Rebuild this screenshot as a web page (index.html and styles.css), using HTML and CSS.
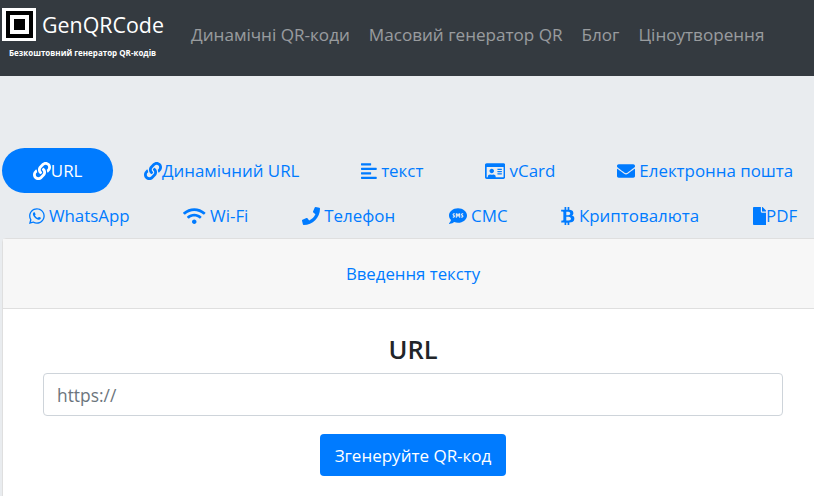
FILE: index.html
```html
<!DOCTYPE html>
<html>
  <head>
    <title>GenQRCode</title>
    <link rel="stylesheet" href="styles.css">
  </head>
  <body>
    <nav class="navbar">
      <div class="brand">
        <div class="brand-top">
          <svg class="logo" viewBox="0 0 34 33">
            <rect width="34" height="33" fill="#fff"/>
            <rect x="4" y="3" width="27" height="27" fill="#000"/>
            <rect x="8" y="7" width="19" height="19" fill="#fff"/>
            <rect x="12" y="11" width="11" height="11" fill="#000"/>
          </svg>
          <span class="brand-name">GenQRCode</span>
        </div>
        <div class="brand-sub">Безкоштовний генератор QR-кодів</div>
      </div>
      <div class="nav-links">
        <a href="#">Динамічні QR-коди</a>
        <a href="#">Масовий генератор QR</a>
        <a href="#">Блог</a>
        <a href="#">Ціноутворення</a>
      </div>
    </nav>

    <div class="main">
      <ul class="pills">
        <li><a class="active" href="#"><svg class="icon" viewBox="0 0 512 512"><path d="M326.612 185.391c59.747 59.809 58.927 155.698.36 214.59-.11.12-.24.25-.36.37l-67.2 67.2c-59.27 59.27-155.699 59.262-214.96 0-59.27-59.26-59.27-155.7 0-214.96l37.106-37.106c9.84-9.84 26.786-3.3 27.294 10.606.648 17.722 3.826 35.527 9.69 52.721 1.986 5.822.567 12.262-3.783 16.612l-13.087 13.087c-28.026 28.026-28.905 73.66-1.155 101.96 28.024 28.579 74.086 28.749 102.325.51l67.2-67.19c28.191-28.191 28.073-73.757 0-101.83-3.701-3.694-7.429-6.564-10.341-8.569a16.037 16.037 0 0 1-6.947-12.606c-.396-10.567 3.348-21.456 11.698-29.806l21.054-21.055c5.521-5.521 14.182-6.199 20.584-1.731a152.482 152.482 0 0 1 20.522 17.197zM467.547 44.449c-59.261-59.262-155.69-59.27-214.96 0l-67.2 67.2c-.12.12-.25.25-.36.37-58.566 58.892-59.387 154.781.36 214.59a152.454 152.454 0 0 0 20.521 17.196c6.402 4.468 15.064 3.789 20.584-1.731l21.054-21.055c8.35-8.35 12.094-19.239 11.698-29.806a16.037 16.037 0 0 0-6.947-12.606c-2.912-2.005-6.64-4.875-10.341-8.569-28.073-28.073-28.191-73.639 0-101.83l67.2-67.19c28.239-28.239 74.3-28.069 102.325.51 27.75 28.3 26.872 73.934-1.155 101.96l-13.087 13.087c-4.35 4.35-5.769 10.79-3.783 16.612 5.864 17.194 9.042 34.999 9.69 52.721.509 13.906 17.454 20.446 27.294 10.606l37.106-37.106c59.271-59.259 59.271-155.699.001-214.959z"/></svg>URL</a></li>
        <li><a href="#"><svg class="icon" viewBox="0 0 512 512"><path d="M326.612 185.391c59.747 59.809 58.927 155.698.36 214.59-.11.12-.24.25-.36.37l-67.2 67.2c-59.27 59.27-155.699 59.262-214.96 0-59.27-59.26-59.27-155.7 0-214.96l37.106-37.106c9.84-9.84 26.786-3.3 27.294 10.606.648 17.722 3.826 35.527 9.69 52.721 1.986 5.822.567 12.262-3.783 16.612l-13.087 13.087c-28.026 28.026-28.905 73.66-1.155 101.96 28.024 28.579 74.086 28.749 102.325.51l67.2-67.19c28.191-28.191 28.073-73.757 0-101.83-3.701-3.694-7.429-6.564-10.341-8.569a16.037 16.037 0 0 1-6.947-12.606c-.396-10.567 3.348-21.456 11.698-29.806l21.054-21.055c5.521-5.521 14.182-6.199 20.584-1.731a152.482 152.482 0 0 1 20.522 17.197zM467.547 44.449c-59.261-59.262-155.69-59.27-214.96 0l-67.2 67.2c-.12.12-.25.25-.36.37-58.566 58.892-59.387 154.781.36 214.59a152.454 152.454 0 0 0 20.521 17.196c6.402 4.468 15.064 3.789 20.584-1.731l21.054-21.055c8.35-8.35 12.094-19.239 11.698-29.806a16.037 16.037 0 0 0-6.947-12.606c-2.912-2.005-6.64-4.875-10.341-8.569-28.073-28.073-28.191-73.639 0-101.83l67.2-67.19c28.239-28.239 74.3-28.069 102.325.51 27.75 28.3 26.872 73.934-1.155 101.96l-13.087 13.087c-4.35 4.35-5.769 10.79-3.783 16.612 5.864 17.194 9.042 34.999 9.69 52.721.509 13.906 17.454 20.446 27.294 10.606l37.106-37.106c59.271-59.259 59.271-155.699.001-214.959z"/></svg>Динамічний URL</a></li>
        <li><a href="#"><svg class="icon" viewBox="0 0 448 512"><path d="M12.83 352h262.34A12.82 12.82 0 0 0 288 339.17v-38.34A12.82 12.82 0 0 0 275.17 288H12.83A12.82 12.82 0 0 0 0 300.83v38.34A12.82 12.82 0 0 0 12.83 352zm0-256h262.34A12.82 12.82 0 0 0 288 83.17V44.83A12.82 12.82 0 0 0 275.17 32H12.83A12.82 12.82 0 0 0 0 44.83v38.34A12.82 12.82 0 0 0 12.83 96zM432 160H16a16 16 0 0 0-16 16v32a16 16 0 0 0 16 16h416a16 16 0 0 0 16-16v-32a16 16 0 0 0-16-16zm0 256H16a16 16 0 0 0-16 16v32a16 16 0 0 0 16 16h416a16 16 0 0 0 16-16v-32a16 16 0 0 0-16-16z"/></svg> текст</a></li>
        <li><a href="#"><svg class="icon" viewBox="0 0 576 512"><path d="M528 32H48C21.5 32 0 53.5 0 80v352c0 26.5 21.5 48 48 48h480c26.5 0 48-21.5 48-48V80c0-26.5-21.5-48-48-48zm0 400H303.2c.9-4.5.8 3.6.8-22.4 0-31.8-30.1-57.6-67.2-57.6-10.8 0-18.7 8-44.8 8-26.9 0-33.4-8-44.8-8-37.1 0-67.2 25.8-67.2 57.6 0 26-.2 17.9.8 22.4H48V144h480v288zm-168-80h112c4.4 0 8-3.6 8-8v-16c0-4.4-3.6-8-8-8H360c-4.4 0-8 3.6-8 8v16c0 4.4 3.6 8 8 8zm0-64h112c4.4 0 8-3.6 8-8v-16c0-4.4-3.6-8-8-8H360c-4.4 0-8 3.6-8 8v16c0 4.4 3.6 8 8 8zm0-64h112c4.4 0 8-3.6 8-8v-16c0-4.4-3.6-8-8-8H360c-4.4 0-8 3.6-8 8v16c0 4.4 3.6 8 8 8zm-168 96c35.3 0 64-28.7 64-64s-28.7-64-64-64-64 28.7-64 64 28.7 64 64 64z"/></svg> vCard</a></li>
        <li><a href="#"><svg class="icon" viewBox="0 0 512 512"><path d="M502.3 190.8c3.9-3.1 9.7-.2 9.7 4.7V400c0 26.5-21.5 48-48 48H48c-26.5 0-48-21.5-48-48V195.6c0-5 5.7-7.8 9.7-4.7 22.4 17.4 52.1 39.5 154.1 113.6 21.1 15.4 56.7 47.8 92.2 47.6 35.7.3 72-32.8 92.3-47.6 102-74.1 131.6-96.3 154-113.7zM256 320c23.2.4 56.6-29.2 73.4-41.4 132.7-96.3 142.8-104.7 173.4-128.7 5.8-4.5 9.2-11.5 9.2-18.9v-19c0-26.5-21.5-48-48-48H48C21.5 64 0 85.5 0 112v19c0 7.4 3.4 14.3 9.2 18.9 30.6 23.9 40.7 32.4 173.4 128.7 16.8 12.2 50.2 41.8 73.4 41.4z"/></svg> Електронна пошта</a></li>
      </ul>
      <ul class="pills">
        <li><a href="#"><svg class="icon" viewBox="0 0 448 512"><path d="M380.9 97.1C339 55.1 283.2 32 223.9 32c-122.4 0-222 99.6-222 222 0 39.1 10.2 77.3 29.6 111L0 480l117.7-30.9c32.4 17.7 68.9 27 106.1 27h.1c122.3 0 224.1-99.6 224.1-222 0-59.3-25.2-115-67.1-157zm-157 341.6c-33.2 0-65.7-8.9-94-25.7l-6.7-4-69.8 18.3L72 359.2l-4.4-7c-18.5-29.4-28.2-63.3-28.2-98.2 0-101.7 82.8-184.5 184.6-184.5 49.3 0 95.6 19.2 130.4 54.1 34.8 34.9 56.2 81.2 56.1 130.5 0 101.8-84.9 184.6-186.6 184.6zm101.2-138.2c-5.5-2.8-32.8-16.2-37.9-18-5.1-1.9-8.8-2.8-12.5 2.8-3.7 5.6-14.3 18-17.6 21.8-3.2 3.7-6.5 4.2-12 1.4-32.6-16.3-54-29.1-75.5-66-5.7-9.8 5.7-9.1 16.3-30.3 1.8-3.7.9-6.9-.5-9.7-1.4-2.8-12.5-30.1-17.1-41.2-4.5-10.8-9.1-9.3-12.5-9.5-3.2-.2-6.9-.2-10.6-.2-3.7 0-9.7 1.4-14.8 6.9-5.1 5.6-19.4 19-19.4 46.3 0 27.3 19.9 53.7 22.6 57.4 2.8 3.7 39.1 59.7 94.8 83.8 35.2 15.2 49 16.5 66.6 13.9 10.7-1.6 32.8-13.4 37.4-26.4 4.6-13 4.6-24.1 3.2-26.4-1.3-2.5-5-3.9-10.5-6.6z"/></svg> WhatsApp</a></li>
        <li><a href="#"><svg class="icon" viewBox="0 0 640 512"><path d="M634.91 154.88C457.74-8.99 182.19-8.93 5.09 154.88c-6.66 6.16-6.79 16.59-.35 22.98l34.24 33.97c6.14 6.1 16.02 6.23 22.4.38 145.92-133.68 371.3-133.71 517.25 0 6.38 5.85 16.26 5.71 22.4-.38l34.24-33.97c6.43-6.39 6.3-16.82-.36-22.98zM320 352c-35.35 0-64 28.65-64 64s28.65 64 64 64 64-28.65 64-64-28.65-64-64-64zm202.67-83.59c-115.26-101.93-290.21-101.82-405.34 0-6.9 6.1-7.12 16.69-.57 23.15l34.44 33.99c6 5.92 15.66 6.32 22.05.8 83.95-72.57 209.74-72.41 293.49 0 6.39 5.52 16.05 5.13 22.05-.8l34.44-33.99c6.56-6.46 6.33-17.06-.56-23.15z"/></svg> Wi-Fi</a></li>
        <li><a href="#"><svg class="icon" viewBox="0 0 512 512"><path d="M493.4 24.6l-104-24c-11.3-2.6-22.9 3.3-27.5 13.9l-48 112c-4.2 9.8-1.4 21.3 6.9 28l60.6 49.6c-36 76.7-98.9 140.5-177.2 177.2l-49.6-60.6c-6.8-8.3-18.2-11.1-28-6.9l-112 48C3.9 366.5-2 378.1.6 389.4l24 104C27.1 504.2 36.7 512 48 512c256.1 0 464-207.5 464-464 0-11.2-7.7-20.9-18.6-23.4z"/></svg> Телефон</a></li>
        <li><a href="#"><svg class="icon" viewBox="0 0 512 512"><path d="M256 32C114.6 32 0 125.1 0 240c0 49.6 21.4 95 57 130.7C44.5 421.1 2.7 466 2.2 466.5c-2.2 2.3-2.8 5.7-1.5 8.7 1.3 3 4.1 4.8 7.3 4.8 66.3 0 116-31.8 140.6-51.4 32.7 12.3 69 19.4 107.4 19.4 141.4 0 256-93.1 256-208S397.4 32 256 32zM128.2 304H116c-4.4 0-8-3.6-8-8v-16c0-4.4 3.6-8 8-8h12.3c6 0 10.4-3.5 10.4-6.6 0-1.3-.8-2.7-2.1-3.8l-21.9-18.8c-8.5-7.2-13.3-17.5-13.3-28.1 0-21.3 19-38.6 42.4-38.6H156c4.4 0 8 3.6 8 8v16c0 4.4-3.6 8-8 8h-12.3c-6 0-10.4 3.5-10.4 6.6 0 1.3.8 2.7 2.1 3.8l21.9 18.8c8.5 7.2 13.3 17.5 13.3 28.1.1 21.3-19 38.6-42.4 38.6zm191.8-8c0 4.4-3.6 8-8 8h-16c-4.4 0-8-3.6-8-8v-68.2l-24.8 55.8c-2.9 5.9-11.4 5.9-14.3 0L224 227.8V296c0 4.4-3.6 8-8 8h-16c-4.4 0-8-3.6-8-8V192c0-8.8 7.2-16 16-16h16c6.1 0 11.6 3.4 14.3 8.8l17.7 35.4 17.7-35.4c2.7-5.4 8.3-8.8 14.3-8.8h16c8.8 0 16 7.2 16 16v104zm48.3 8H356c-4.4 0-8-3.6-8-8v-16c0-4.4 3.6-8 8-8h12.3c6 0 10.4-3.5 10.4-6.6 0-1.3-.8-2.7-2.1-3.8l-21.9-18.8c-8.5-7.2-13.3-17.5-13.3-28.1 0-21.3 19-38.6 42.4-38.6H396c4.4 0 8 3.6 8 8v16c0 4.4-3.6 8-8 8h-12.3c-6 0-10.4 3.5-10.4 6.6 0 1.3.8 2.7 2.1 3.8l21.9 18.8c8.5 7.2 13.3 17.5 13.3 28.1.1 21.3-18.9 38.6-42.3 38.6z"/></svg> СМС</a></li>
        <li><a href="#"><svg class="icon" viewBox="0 0 384 512"><path d="M310.204 242.638c27.73-14.18 45.377-39.39 41.28-81.3-5.358-57.351-52.458-76.573-114.85-81.929V0h-48.528v77.203c-12.605 0-25.525.315-38.444.63V0h-48.528v79.409c-17.842.539-38.622.276-97.37 0v51.678c38.314-.678 58.417-3.14 63.023 21.427v217.429c-2.925 19.492-18.524 16.685-53.255 16.071L3.765 443.68c88.481 0 97.37.315 97.37.315V512h48.528v-67.06c13.234.315 26.154.315 38.444.315V512h48.528v-68.005c81.299-4.412 135.647-24.894 142.895-101.467 5.671-61.446-23.32-88.862-69.326-99.89zM150.608 134.553c27.415 0 113.126-8.507 113.126 48.528 0 54.515-85.71 48.212-113.126 48.212v-96.74zm0 251.776V279.821c32.772 0 133.127-9.138 133.127 53.255-.001 60.186-100.355 53.253-133.127 53.253z"/></svg> Криптовалюта</a></li>
        <li><a href="#"><svg class="icon" viewBox="0 0 384 512"><path d="M224 136V0H24C10.7 0 0 10.7 0 24v464c0 13.3 10.7 24 24 24h336c13.3 0 24-10.7 24-24V160H248c-13.2 0-24-10.8-24-24zm160-14.1v6.1H256V0h6.1c6.4 0 12.5 2.5 17 7l97.9 98c4.5 4.5 7 10.6 7 16.9z"/></svg>PDF</a></li>
      </ul>

      <div class="card">
        <div class="card-header"><a href="#">Введення тексту</a></div>
        <div class="card-body">
          <h4>URL</h4>
          <input class="url-input" type="text" placeholder="https://">
          <button class="btn-generate">Згенеруйте QR-код</button>
        </div>
      </div>
    </div>
  </body>
</html>
```

FILE: styles.css
```css
html {
  overflow: hidden;
}
body {
  font-family: "Open Sans", "Noto Sans", sans-serif;
  background-color: #e9ecef;
  color: #212529;
  font-size: 16px;
  margin: 0;
}
a {
  text-decoration: none;
  color: #007bff;
}
.navbar {
  background-color: #343a40;
  height: 76px;
  display: flex;
  align-items: flex-start;
}
.brand {
  width: 191px;
  padding: 8px 0 0 2px;
  box-sizing: border-box;
}
.brand-top {
  display: flex;
  align-items: center;
  gap: 6px;
}
.logo {
  width: 34px;
  height: 33px;
}
.brand-name {
  color: #fff;
  font-size: 21.4px;
  line-height: 33px;
}
.brand-sub {
  color: #fff;
  font-size: 8px;
  font-weight: 700;
  margin: 6px 0 0 7px;
}
.nav-links {
  display: flex;
  gap: 19px;
  padding-top: 22px;
}
.nav-links a {
  color: rgba(255, 255, 255, 0.5);
  font-size: 17.1px;
  line-height: 26px;
}
.main {
  width: 822px;
  margin-left: 2px;
  padding-top: 72px;
}
.pills {
  display: flex;
  list-style: none;
  margin: 0;
  padding: 0;
}
.pills li {
  flex: 1 1 auto;
  text-align: center;
}
.pills a {
  display: block;
  height: 45px;
  line-height: 45px;
  padding: 0 16px;
  border-radius: 23px;
  font-size: 16.9px;
  white-space: nowrap;
}
.pills a.active {
  background-color: #007bff;
  color: #fff;
}
.icon {
  height: 18px;
  width: auto;
  fill: currentColor;
  vertical-align: -3px;
}
.card {
  background: #fff;
  border: 1px solid #dfdfdf;
  border-radius: 4px;
  padding-bottom: 30px;
}
.card-header {
  background-color: #f7f7f7;
  border-bottom: 1px solid #dfdfdf;
  height: 69px;
  line-height: 70px;
  text-align: center;
  font-size: 16.8px;
}
.card-body {
  padding: 24px 40px 0;
  text-align: center;
}
.card-body h4 {
  font-size: 25.5px;
  font-weight: 600;
  line-height: 32px;
  margin: 0 0 8px;
}
.url-input {
  display: block;
  box-sizing: border-box;
  width: 100%;
  height: 43px;
  padding: 0 13px;
  border: 1px solid #ced4da;
  border-radius: 4px;
  font-family: inherit;
  font-size: 17.4px;
  color: #495057;
}
.url-input::placeholder {
  color: #6c757d;
}
.btn-generate {
  margin-top: 18px;
  height: 42px;
  padding: 0 15px;
  border: none;
  border-radius: 4px;
  background-color: #007bff;
  color: #fff;
  font-family: inherit;
  font-size: 17px;
}
```
